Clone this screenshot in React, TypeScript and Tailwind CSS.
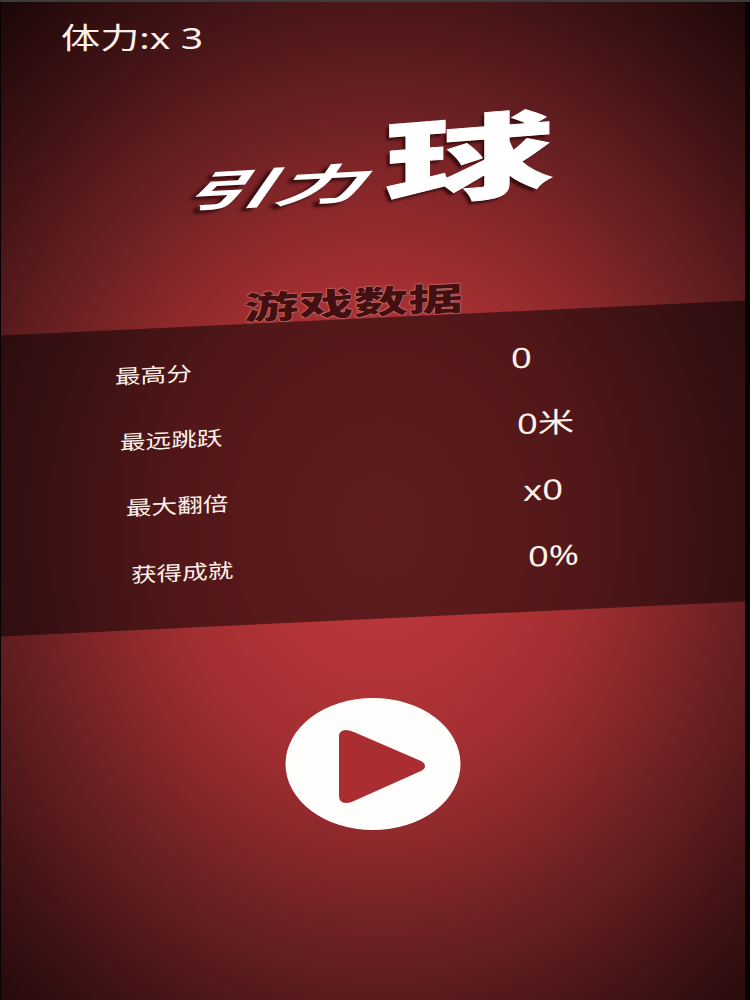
const stats = [
  { label: "最高分", value: "0", indent: "pl-[114px]", valueIndent: "pl-[510px]" },
  { label: "最远跳跃", value: "0米", indent: "pl-[119px]", valueIndent: "pl-[516px]" },
  { label: "最大翻倍", value: "x0", indent: "pl-[125px]", valueIndent: "pl-[522px]" },
  { label: "获得成就", value: "0%", indent: "pl-[130px]", valueIndent: "pl-[527px]" },
];

export default function App() {
  return (
    <div className="w-[750px] h-[1000px] overflow-hidden bg-[#080203] border-t-2 border-t-[#3d3a3a] pl-px pr-[5px] text-[#fff1ea] font-['Noto_Sans','Noto_Sans_CJK_SC',sans-serif]">
      <main className="h-[998px] flex flex-col overflow-hidden bg-[radial-gradient(ellipse_590px_690px_at_51%_52.5%,#bd393d_0%,#b33438_20%,#a22e31_36%,#8a282b_47%,#6f2124_59%,#571a1c_70%,#411315_80%,#280b0c_93%,#190708_100%)]">
        {/* Stamina */}
        <header className="h-[76px] pl-[60px] pt-[15px]">
          <p className="w-fit origin-left scale-x-[1.35] text-[29px] leading-[42px] whitespace-pre">体力:x 3</p>
        </header>

        {/* Logo */}
        <h1 className="h-[185px] pl-[193px] flex items-start font-black text-white leading-none font-['Noto_Sans_CJK_SC',sans-serif] [text-shadow:-2px_3px_2px_#3a0c0e]">
          <span className="mt-[90px] w-[191px] h-[42px] text-[42px] font-bold leading-[42px] origin-left [transform:skewY(-3deg)_skewX(-36deg)_scaleX(2.14)] whitespace-nowrap">引力</span>
          <span className="mt-[34px] w-[166px] h-[94px] text-[92px] leading-[94px] origin-left [transform:skewY(-4.5deg)_scaleX(1.83)] [-webkit-text-stroke:1px_white] whitespace-nowrap">球</span>
        </h1>

        <h2 className="h-[55px] pl-[243px] pt-[26px] text-[#430f10] font-black font-['Noto_Sans_CJK_SC',sans-serif]">
          <span className="block w-fit origin-left text-[32px] leading-[34px] [transform:skewY(-2.7deg)_scaleX(1.71)] [text-shadow:0_0_1px_#f0a39b,0_0_1px_#f0a39b]">游戏数据</span>
        </h2>

        {/* Stats panel */}
        <section className="relative h-[301px] shrink-0 pt-[13px] bg-black/50 -skew-y-[2.7deg]">
          {stats.map((row) => (
            <div key={row.label} className="grid h-[66.3px] items-center">
              <span className={`col-start-1 row-start-1 text-xl pt-px ${row.indent}`}>
                <span className="inline-block origin-left scale-x-[1.28]">{row.label}</span>
              </span>
              <span className={`col-start-1 row-start-1 text-[28px] ${row.valueIndent}`}>
                <span className="inline-block origin-left scale-x-[1.3]">{row.value}</span>
              </span>
            </div>
          ))}
        </section>

        <div className="flex justify-center pt-[79px]">
          <button aria-label="开始" className="block">
            <svg width="176" height="132" viewBox="0 0 176 132" className="block">
              <ellipse cx="88" cy="66" rx="87.5" ry="66" fill="#fffefd" />
              <path
                d="M54 38.5 Q54 32 61 32 Q65 32 70 34.500 L136 63 Q140 65 140 68 Q140 71 136 73 L70 102.500 Q65 105 61 105 Q54 105 54 98 Z"
                fill="#a92d31"
              />
            </svg>
          </button>
        </div>
      </main>
    </div>
  );
}
